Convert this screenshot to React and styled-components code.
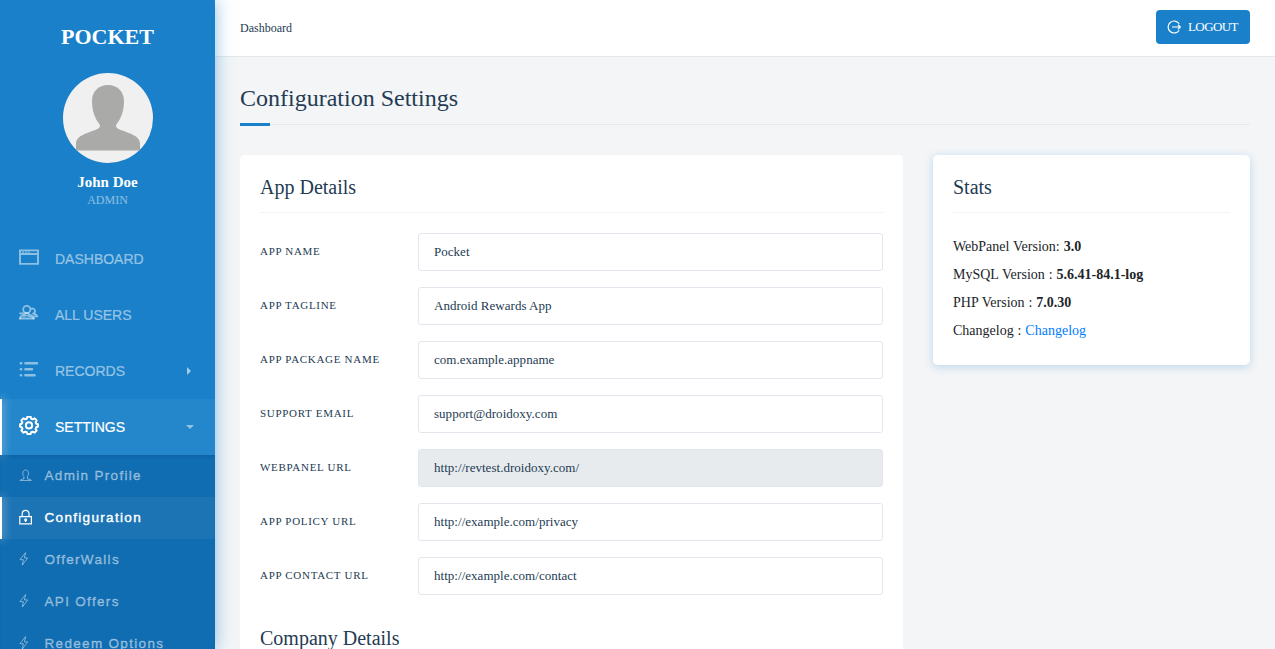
import React from "react";
import styled, { createGlobalStyle, css } from "styled-components";

const Global = createGlobalStyle`
  * { box-sizing: border-box; }
  html, body { margin: 0; height: 649px; overflow: hidden; background: #f3f5f7; }
  body { font-family: "Liberation Serif", "Times New Roman", serif; color: #212529; }
`;

const Shell = styled.div`
  display: flex;
  height: 649px;
  overflow: hidden;
`;

const Sidebar = styled.aside`
  position: relative;
  z-index: 2;
  flex: 0 0 215px;
  height: 649px;
  background: #1980c9;
  color: #fff;
  box-shadow: 0 0 16px rgba(25, 128, 201, 0.5);
`;

const Brand = styled.div`
  padding-top: 24px;
  height: 73px;
  text-align: center;
  font-size: 22px;
  line-height: 26px;
  font-weight: 700;
`;

const Profile = styled.div`
  display: flex;
  flex-direction: column;
  align-items: center;
  height: 158px;
`;

const Avatar = styled.svg`
  display: block;
  width: 90px;
  height: 90px;
  margin-left: 1px;
`;

const UserName = styled.div`
  margin-top: 10px;
  font-size: 15px;
  line-height: 18px;
  font-weight: 700;
`;

const UserRole = styled.div`
  font-size: 12px;
  line-height: 19px;
  opacity: 0.5;
`;

const marker = css`
  &::before {
    content: "";
    position: absolute;
    left: 0;
    top: 0;
    bottom: 0;
    width: 2px;
    background: #fff;
    box-shadow: 0 0 10px 1px rgba(255, 255, 255, 0.5);
  }
`;

const MenuItem = styled.div`
  position: relative;
  display: flex;
  align-items: center;
  height: 56px;
  padding: 0 21px 0 19px;
  font: 14px/20px "Liberation Sans", Arial, sans-serif;
  color: ${(p) => (p.$active ? "#fff" : "rgba(255,255,255,0.5)")};
  -webkit-text-stroke: 0.2px currentColor;
  background: ${(p) => (p.$active ? "rgba(255,255,255,0.05)" : "transparent")};
  ${(p) => p.$active && marker}
`;

const MenuIcon = styled.svg`
  width: 20px;
  height: 20px;
  margin: 0 16px 3px 0;
  fill: none;
  stroke: currentColor;
  stroke-linecap: round;
  stroke-linejoin: round;
`;

const MenuLabel = styled.span`
  flex: 1;
`;

const Caret = styled.i`
  width: 0;
  height: 0;
  border: 4px solid transparent;
  ${(p) =>
    p.$open
      ? css`
          border-width: 4px 4.5px 0;
          border-top-color: rgba(255, 255, 255, 0.5);
        `
      : css`
          border-width: 4px 0 4px 4px;
          margin-right: 3px;
          border-left-color: rgba(255, 255, 255, 0.6);
        `}
`;

const SubMenu = styled.div`
  background: #106db2;
  box-shadow: inset 0 3px 4px -2px rgba(0, 0, 0, 0.12);
`;

const SubItem = styled.div`
  position: relative;
  display: flex;
  align-items: center;
  height: 42px;
  padding: 0 0 0 19px;
  font: 13.5px/20px "Liberation Sans", Arial, sans-serif;
  letter-spacing: 1.32px;
  -webkit-text-stroke: 0.4px currentColor;
  color: ${(p) => (p.$active ? "#fff" : "rgba(255,255,255,0.45)")};
  background: ${(p) => (p.$active ? "rgba(255,255,255,0.05)" : "transparent")};
  ${(p) => p.$active && marker}
`;

const SubIcon = styled.svg`
  width: 14px;
  height: 16px;
  margin: 0 11.5px 2px 0;
  fill: none;
  stroke: currentColor;
`;

const Page = styled.div`
  flex: 1;
  min-width: 0;
`;

const TopBar = styled.header`
  display: flex;
  align-items: center;
  justify-content: space-between;
  height: 57px;
  padding: 0 25px 2px;
  background: #fff;
  border-bottom: 1px solid #e2e8ee;
  font-size: 12px;
  color: #243b53;
`;

const Crumb = styled.span`
  padding-top: 2px;
`;

const LogoutButton = styled.button`
  display: flex;
  align-items: center;
  gap: 7px;
  width: 94px;
  height: 34px;
  padding: 0 0 0 11px;
  border: 0;
  border-radius: 4px;
  background: #1980c9;
  color: #fff;
  font: 13px "Liberation Serif", serif;
  letter-spacing: -0.6px;
`;

const LogoutIcon = styled.svg`
  width: 14px;
  height: 14px;
  fill: none;
  stroke: currentColor;
`;

const Heading = styled.h1`
  position: relative;
  margin: 0 25px;
  height: 68px;
  padding-top: 27px;
  border-bottom: 1px solid #e6e9ec;
  font-size: 24px;
  line-height: 29px;
  font-weight: 400;
  color: #243b53;
  &::after {
    content: "";
    position: absolute;
    left: 0;
    bottom: -2px;
    width: 30px;
    height: 3px;
    background: #1980c9;
  }
`;

const Columns = styled.main`
  display: flex;
  align-items: flex-start;
  gap: 30px;
  padding: 30px 25px 0;
`;

const Card = styled.section`
  padding: 20px 20px 0;
  background: #fff;
  border-radius: 5px;
`;

const FormCard = styled(Card)`
  width: 663px;
  height: 600px;
`;

const StatsCard = styled(Card)`
  width: 317px;
  height: 210px;
  box-shadow: 0 2px 8px rgba(25, 128, 201, 0.25);
`;

const CardTitle = styled.h2`
  margin: 0;
  height: 38px;
  font-size: 20px;
  line-height: 24px;
  font-weight: 400;
  color: #243b53;
  border-bottom: 1px solid #f1f3f5;
`;

const Fields = styled.div`
  display: flex;
  flex-direction: column;
  gap: 16px;
  padding: 20px 0 31px;
`;

const Field = styled.label`
  display: flex;
  justify-content: space-between;
  height: 38px;
`;

const FieldLabel = styled.span`
  padding-top: 10px;
  font-size: 11px;
  line-height: 16px;
  letter-spacing: 0.7px;
  color: #243b53;
`;

const Input = styled.input`
  width: 465px;
  height: 38px;
  padding: 0 15px;
  border: 1px solid #e2e7ee;
  border-radius: 3px;
  background: ${(p) => (p.disabled ? "#e7ebee" : "#fff")};
  color: #243b53;
  font: 13px "Liberation Serif", serif;
  letter-spacing: 0.03px;
`;

const StatsList = styled.div`
  padding-top: 20px;
  font-size: 14px;
  line-height: 28px;
  word-spacing: 0.4px;
`;

const Link = styled.a`
  color: #007bff;
`;

const fields = [
  ["APP NAME", "Pocket"],
  ["APP TAGLINE", "Android Rewards App"],
  ["APP PACKAGE NAME", "com.example.appname"],
  ["SUPPORT EMAIL", "support@droidoxy.com"],
  ["WEBPANEL URL", "http://revtest.droidoxy.com/", true],
  ["APP POLICY URL", "http://example.com/privacy"],
  ["APP CONTACT URL", "http://example.com/contact"],
];

const WindowIcon = () => (
  <MenuIcon viewBox="0 0 20 20" strokeWidth="1.9">
    <path d="M1 2.400h18v13.500H1zM1 6h18" strokeLinejoin="miter" />
    <path d="M3.600 4.200h.8M6.500 4.200h.8M9.400 4.200h.8" strokeWidth="1.2" />
  </MenuIcon>
);

const UsersIcon = () => (
  <MenuIcon viewBox="0 0 20 20" strokeWidth="1.8">
    <circle cx="7.8" cy="5.400" r="3.600" />
    <path d="M1 14.500c.2-2.300 2.100-3.300 4.500-3.900l1-1.300M9.200 9.300l.8 1.300c2.600.6 4.500 1.600 4.800 3.900zH1M12.500 4.600c2-.5 3.500.7 3.500 2.300 0 1.600-.7 2.500-2 2.800 2.400.3 4 1.300 4.300 2.700h-3.200" />
    <path d="M4.500 12.700c2-1.200 4.500-1.200 6.500 0" strokeWidth="1.2" />
    <path d="M1 14.500h13.800" />
  </MenuIcon>
);

const ListIcon = () => (
  <MenuIcon viewBox="0 0 20 20" strokeWidth="2.5">
    <path d="M1.800 3.300h.4M6.400 3.300H18M1.800 9.300h.4M6.400 9.300H13M1.800 15.300h.4M6.400 15.300h9.200" />
  </MenuIcon>
);

const GearIcon = () => (
  <MenuIcon viewBox="0 0 20 20" strokeWidth="2">
    <path d="M8.300.8h3.400l.5 1.900 1.500.6 1.800-1 2.100 2.100-1 1.800.6 1.500 1.700.5V10.800l-1.700.5-.6 1.600 1 1.700-2.100 2.100-1.800-1-1.500.6-.5 1.600H8.300l-.5-1.600-1.500-.6-1.800 1-2.100-2.100 1-1.700-.6-1.600-1.700-.5V8.200l1.700-.5.600-1.500-1-1.800 2.100-2.100 1.800 1 1.500-.6z" />
    <circle cx="10" cy="9.400" r="3.100" />
  </MenuIcon>
);

const PersonIcon = () => (
  <SubIcon viewBox="0 0 14 16">
    <path d="M4.900 9.500C3.300 8 3.300 3 6.700 3s3.400 5 1.800 6.500v2.500c1.700.3 3.600.3 3.800 1.500H1.100c.2-1.200 2.100-1.200 3.800-1.500z" />
  </SubIcon>
);

const LockIcon = () => (
  <SubIcon viewBox="0 0 14 16" strokeWidth="1.2">
    <path d="M.8 7.600h11.600v7.200H.8zM3.200 7.600V4.700c0-4.400 6.800-4.400 6.800 0v2.900M6.600 11.500v1.400" />
    <circle cx="6.600" cy="10.800" r=".9" />
  </SubIcon>
);

const BoltIcon = () => (
  <SubIcon viewBox="0 0 14 16">
    <path d="M6.600 1.600.9 8.700h3.500L3.300 14 8.700 6.900H5.400z" strokeLinejoin="round" />
  </SubIcon>
);

export default function App() {
  return (
    <>
      <Global />
      <Shell>
        <Sidebar>
          <Brand>POCKET</Brand>
          <Profile>
            <Avatar viewBox="0 0 90 90">
              <circle cx="45" cy="45" r="45" fill="#f0f0f0" />
              <path
                d="M45 12c9.500 0 16 6.500 16 16 0 11-3.500 18-7 22.500-2 2.500-.5 4.500 1.500 5.500 9 4 21.500 6 21.500 15v6.500H13V71c0-9 12.500-11 21.500-15 2-1 3.500-3 1.500-5.500C32.500 46 29 39 29 28c0-9.500 6.500-16 16-16z"
                fill="#aaaaa9"
              />
            </Avatar>
            <UserName>John Doe</UserName>
            <UserRole>ADMIN</UserRole>
          </Profile>
          <MenuItem><WindowIcon /><MenuLabel>DASHBOARD</MenuLabel></MenuItem>
          <MenuItem><UsersIcon /><MenuLabel>ALL USERS</MenuLabel></MenuItem>
          <MenuItem><ListIcon /><MenuLabel>RECORDS</MenuLabel><Caret /></MenuItem>
          <MenuItem $active><GearIcon /><MenuLabel>SETTINGS</MenuLabel><Caret $open /></MenuItem>
          <SubMenu>
            <SubItem><PersonIcon />Admin Profile</SubItem>
            <SubItem $active><LockIcon />Configuration</SubItem>
            <SubItem><BoltIcon />OfferWalls</SubItem>
            <SubItem><BoltIcon />API Offers</SubItem>
            <SubItem><BoltIcon />Redeem Options</SubItem>
          </SubMenu>
        </Sidebar>
        <Page>
          <TopBar>
            <Crumb>Dashboard</Crumb>
            <LogoutButton>
              <LogoutIcon viewBox="0 0 14 14" strokeWidth="1.2">
                <path d="M12.200 3.800A6 6 0 1 0 12.200 10.200M5 7h8.300M11 4.800 13.300 7 11 9.200" />
              </LogoutIcon>
              LOGOUT
            </LogoutButton>
          </TopBar>
          <Heading>Configuration Settings</Heading>
          <Columns>
            <FormCard>
              <CardTitle>App Details</CardTitle>
              <Fields>
                {fields.map(([label, value, disabled]) => (
                  <Field key={label}>
                    <FieldLabel>{label}</FieldLabel>
                    <Input defaultValue={value} disabled={disabled} />
                  </Field>
                ))}
              </Fields>
              <CardTitle>Company Details</CardTitle>
            </FormCard>
            <StatsCard>
              <CardTitle>Stats</CardTitle>
              <StatsList>
                <div>WebPanel Version: <b>3.0</b></div>
                <div>MySQL Version : <b>5.6.41-84.1-log</b></div>
                <div>PHP Version : <b>7.0.30</b></div>
                <div>Changelog : <Link>Changelog</Link></div>
              </StatsList>
            </StatsCard>
          </Columns>
        </Page>
      </Shell>
    </>
  );
}
